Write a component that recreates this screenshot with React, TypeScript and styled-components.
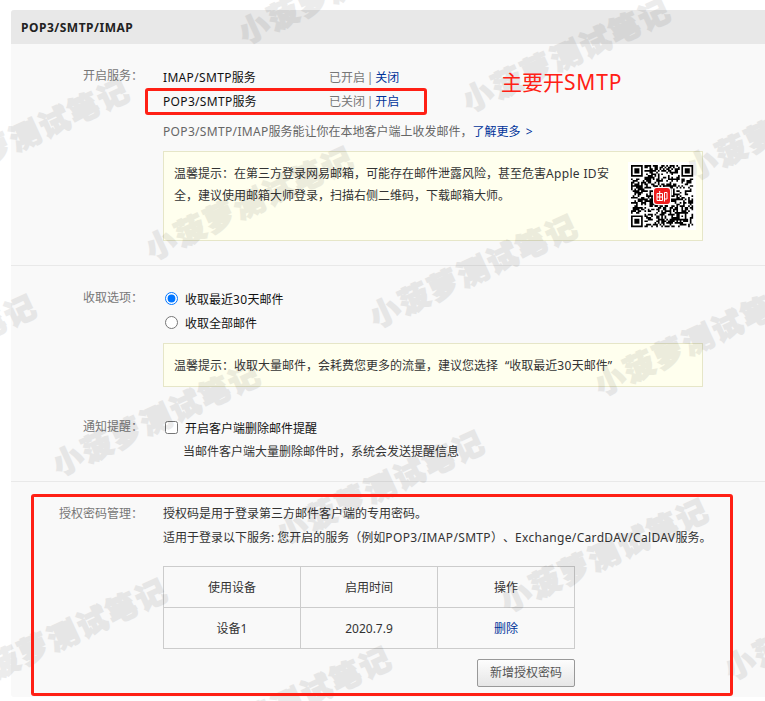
import React from "react";
import styled, { createGlobalStyle } from "styled-components";

const GlobalStyle = createGlobalStyle`
  * { box-sizing: border-box; }
  body {
    margin: 0;
    background: #fff;
    color: #333;
    font: 12px/24px "Noto Sans", "Noto Sans CJK SC", sans-serif;
    text-spacing-trim: space-all;
    overflow: hidden;
  }
`;

const Page = styled.main`
  position: relative;
  height: 701px;
  overflow: hidden;
  padding: 10px 0 0 11px;
`;

const Panel = styled.section`
  height: 687px;
  background: #f9f9f9;
  border-radius: 3px 0 0 3px;
  overflow: hidden;
`;

const PanelTitle = styled.h1`
  margin: 0;
  height: 34px;
  padding-left: 10px;
  background: #e8e8e8;
  color: #222;
  font-size: 12px;
  font-weight: 700;
  line-height: 35px;
  letter-spacing: 0.5px;
`;

const Section = styled.div<{ $height: number; $top: number; $last?: boolean }>`
  height: ${(p) => p.$height}px;
  padding-top: ${(p) => p.$top}px;
  border-bottom: ${(p) => (p.$last ? "0" : "1px solid #e9e9e9")};
`;

const Field = styled.div`
  display: grid;
  grid-template-columns: 132px 1fr;
  column-gap: 20px;
`;

const Label = styled.div<{ $shift?: number }>`
  color: #777;
  text-align: right;
  white-space: nowrap;
  margin-top: ${(p) => p.$shift ?? 0}px;
`;

const Content = styled.div`
  min-width: 0;
  white-space: nowrap;
`;

const ServiceRow = styled.div`
  display: grid;
  grid-template-columns: 166px auto;
  color: #111;
  height: 24px;
`;

const Status = styled.span`
  color: #777;
  word-spacing: -1.3px;
`;

const Link = styled.a`
  color: #003399;
  text-decoration: none;
  cursor: pointer;
`;

const MoreArrow = styled.span`
  margin-left: 5px;
`;

const Hint = styled.p`
  margin: 6px 0 7px;
  height: 24px;
  color: #666;
`;

const Latin = styled.span`
  letter-spacing: 0.33px;
`;

const OpenQuote = styled.span`
  padding-left: 7px;
`;

const Notice = styled.div<{ $height: number }>`
  display: flex;
  justify-content: space-between;
  align-items: flex-start;
  width: 540px;
  height: ${(p) => p.$height}px;
  padding: 0 6px 0 10px;
  border: 1px solid #e6e6c8;
  background: #ffffee;
  line-height: 22px;
`;

const NoticeText = styled.div`
  padding-top: 11px;
`;

const NoticeGap = styled.div<{ $large?: boolean }>`
  height: ${(p) => (p.$large ? 30 : 7)}px;
`;

const QrPlate = styled.svg`
  width: 68px;
  height: 68px;
  margin-top: 10px;
  flex: none;
`;

const Choice = styled.label`
  display: flex;
  align-items: center;
  height: 24px;
  color: #111;

  input {
    margin: 0 7px 3px 2px;
    width: 13px;
    height: 13px;
  }
`;

const SubNote = styled.div`
  padding-left: 20px;
  line-height: 22px;
`;

const Table = styled.table`
  width: 412px;
  margin-top: 16px;
  border-collapse: collapse;
  table-layout: fixed;
  text-align: center;

  td, th {
    height: 41px;
    padding: 1px 0 0;
    font-weight: 400;
    border: 1px solid #ccc;
  }
`;

const Actions = styled.div`
  display: flex;
  justify-content: flex-end;
  width: 412px;
  margin-top: 10px;
`;

const Button = styled.button`
  width: 98px;
  height: 28px;
  padding: 0;
  border: 1px solid #999;
  border-radius: 2px;
  background: linear-gradient(#fdfdfd, #e6e6e6);
  color: #555;
  font: inherit;
  line-height: 26px;
`;

const Highlight = styled.div<{ $x: number; $y: number; $w: number; $h: number }>`
  position: absolute;
  left: ${(p) => p.$x}px;
  top: ${(p) => p.$y}px;
  width: ${(p) => p.$w}px;
  height: ${(p) => p.$h}px;
  border: 3px solid #ff2015;
  border-radius: 3px;
`;

const Remark = styled.div`
  position: absolute;
  left: 501px;
  top: 67px;
  color: #ff2015;
  font-size: 21px;
  line-height: 30px;
  white-space: nowrap;

  span { letter-spacing: 0.8px; }
`;

const Watermark = styled.div<{ $x: number; $y: number }>`
  position: absolute;
  left: ${(p) => p.$x - 15}px;
  top: ${(p) => p.$y - 23}px;
  transform: rotate(-24.8deg);
  transform-origin: 16px 20px;
  font: 900 30px/40px "Noto Sans CJK SC", sans-serif;
  letter-spacing: 2.3px;
  color: #000;
  -webkit-text-stroke: 1.5px #000;
  opacity: 0.07;
  white-space: nowrap;
  pointer-events: none;
`;

const WATERMARKS = [
  [253, 29], [477, 97], [701, 165],
  [-64, 177], [160, 245], [384, 313], [609, 381],
  [-157, 393], [67, 461], [291, 529], [515, 597], [739, 665],
  [-26, 677], [198, 745],
];

const QR_SIZE = 37;

function finderModule(x: number, y: number): boolean | null {
  const corners = [[0, 0], [QR_SIZE - 7, 0], [0, QR_SIZE - 7]];
  for (const [cx, cy] of corners) {
    const d = Math.max(Math.abs(x - cx - 3), Math.abs(y - cy - 3));
    if (d <= 4) return d !== 2 && d !== 4;
  }
  const a = Math.max(Math.abs(x - 30), Math.abs(y - 30));
  return a <= 2 ? a !== 1 : null;
}

function qrPath(): string {
  let seed = 163;
  let d = "";
  for (let y = 0; y < QR_SIZE; y++) {
    for (let x = 0; x < QR_SIZE; x++) {
      seed = (seed * 1103515 + 12345) % 2147483647;
      const fixed = finderModule(x, y);
      if (fixed ?? seed / 2147483647 > 0.47) d += `M${x} ${y}h1v1h-1z`;
    }
  }
  return d;
}

function QrCode() {
  return (
    <QrPlate viewBox="0 0 68 68" aria-label="QR">
      <rect width="68" height="68" fill="#fff" />
      <path d={qrPath()} fill="#000" transform="translate(3 3) scale(1.68)" />
      <rect x="25" y="25" width="18" height="18" rx="3" fill="#fff" />
      <rect x="26" y="26" width="16" height="16" rx="3" fill="#ee1c1c" />
      <path
        d="M29 31.5h5.5v7H29zM31.7 29v9.5M29 35h5.5M36.5 39.5v-9h2.5v6.5h-2"
        fill="none"
        stroke="#fff"
        strokeWidth="1"
      />
    </QrPlate>
  );
}

export default function App() {
  return (
    <Page>
      <GlobalStyle />
      <Panel>
        <PanelTitle>POP3/SMTP/IMAP</PanelTitle>

        <Section $height={222} $top={22}>
          <Field>
            <Label $shift={-2}>开启服务：</Label>
            <Content>
              <ServiceRow>
                <span><Latin>IMAP/SMTP</Latin>服务</span>
                <Status>已开启 | <Link>关闭</Link></Status>
              </ServiceRow>
              <ServiceRow>
                <span><Latin>POP3/SMTP</Latin>服务</span>
                <Status>已关闭 | <Link>开启</Link></Status>
              </ServiceRow>
              <Hint>
                <Latin>POP3/SMTP/IMAP</Latin>服务能让你在本地客户端上收发邮件，
                <Link>了解更多<MoreArrow>&gt;</MoreArrow></Link>
              </Hint>
              <Notice $height={90}>
                <NoticeText>
                  温馨提示：在第三方登录网易邮箱，可能存在邮件泄露风险，甚至危害<Latin>Apple ID</Latin>安
                  <br />
                  全，建议使用邮箱大师登录，扫描右侧二维码，下载邮箱大师。
                </NoticeText>
                <QrCode />
              </Notice>
            </Content>
          </Field>
        </Section>

        <Section $height={216} $top={22}>
          <Field>
            <Label $shift={-2}>收取选项：</Label>
            <Content>
              <Choice>
                <input type="radio" name="range" defaultChecked />
                <span>收取最近<Latin>30</Latin>天邮件</span>
              </Choice>
              <Choice>
                <input type="radio" name="range" />
                <span>收取全部邮件</span>
              </Choice>
            </Content>
          </Field>
          <Field>
            <span />
            <Content>
              <NoticeGap />
              <Notice $height={44}>
                <NoticeText>
                  温馨提示：收取大量邮件，会耗费您更多的流量，建议您选择<OpenQuote>“</OpenQuote>收取最近<Latin>30</Latin>天邮件”
                </NoticeText>
              </Notice>
              <NoticeGap $large />
            </Content>
          </Field>
          <Field>
            <Label $shift={-2}>通知提醒：</Label>
            <Content>
              <Choice>
                <input type="checkbox" />
                <span>开启客户端删除邮件提醒</span>
              </Choice>
              <SubNote>当邮件客户端大量删除邮件时，系统会发送提醒信息</SubNote>
            </Content>
          </Field>
        </Section>

        <Section $height={215} $top={20} $last>
          <Field>
            <Label>授权密码管理：</Label>
            <Content>
              <div>授权码是用于登录第三方邮件客户端的专用密码。</div>
              <div>
                适用于登录以下服务: 您开启的服务（例如<Latin>POP3/IMAP/SMTP</Latin>）、
                <Latin>Exchange/CardDAV/CalDAV</Latin>服务。
              </div>
              <Table>
                <thead>
                  <tr><th>使用设备</th><th>启用时间</th><th>操作</th></tr>
                </thead>
                <tbody>
                  <tr><td>设备1</td><td>2020.7.9</td><td><Link>删除</Link></td></tr>
                </tbody>
              </Table>
              <Actions><Button>新增授权密码</Button></Actions>
            </Content>
          </Field>
        </Section>
      </Panel>

      {WATERMARKS.map(([x, y]) => (
        <Watermark key={`${x},${y}`} $x={x} $y={y}>小菠萝测试笔记</Watermark>
      ))}
      <Highlight $x={145} $y={88} $w={282} $h={27} />
      <Highlight $x={31} $y={494} $w={702} $h={202} />
      <Remark>主要开<span>SMTP</span></Remark>
    </Page>
  );
}
